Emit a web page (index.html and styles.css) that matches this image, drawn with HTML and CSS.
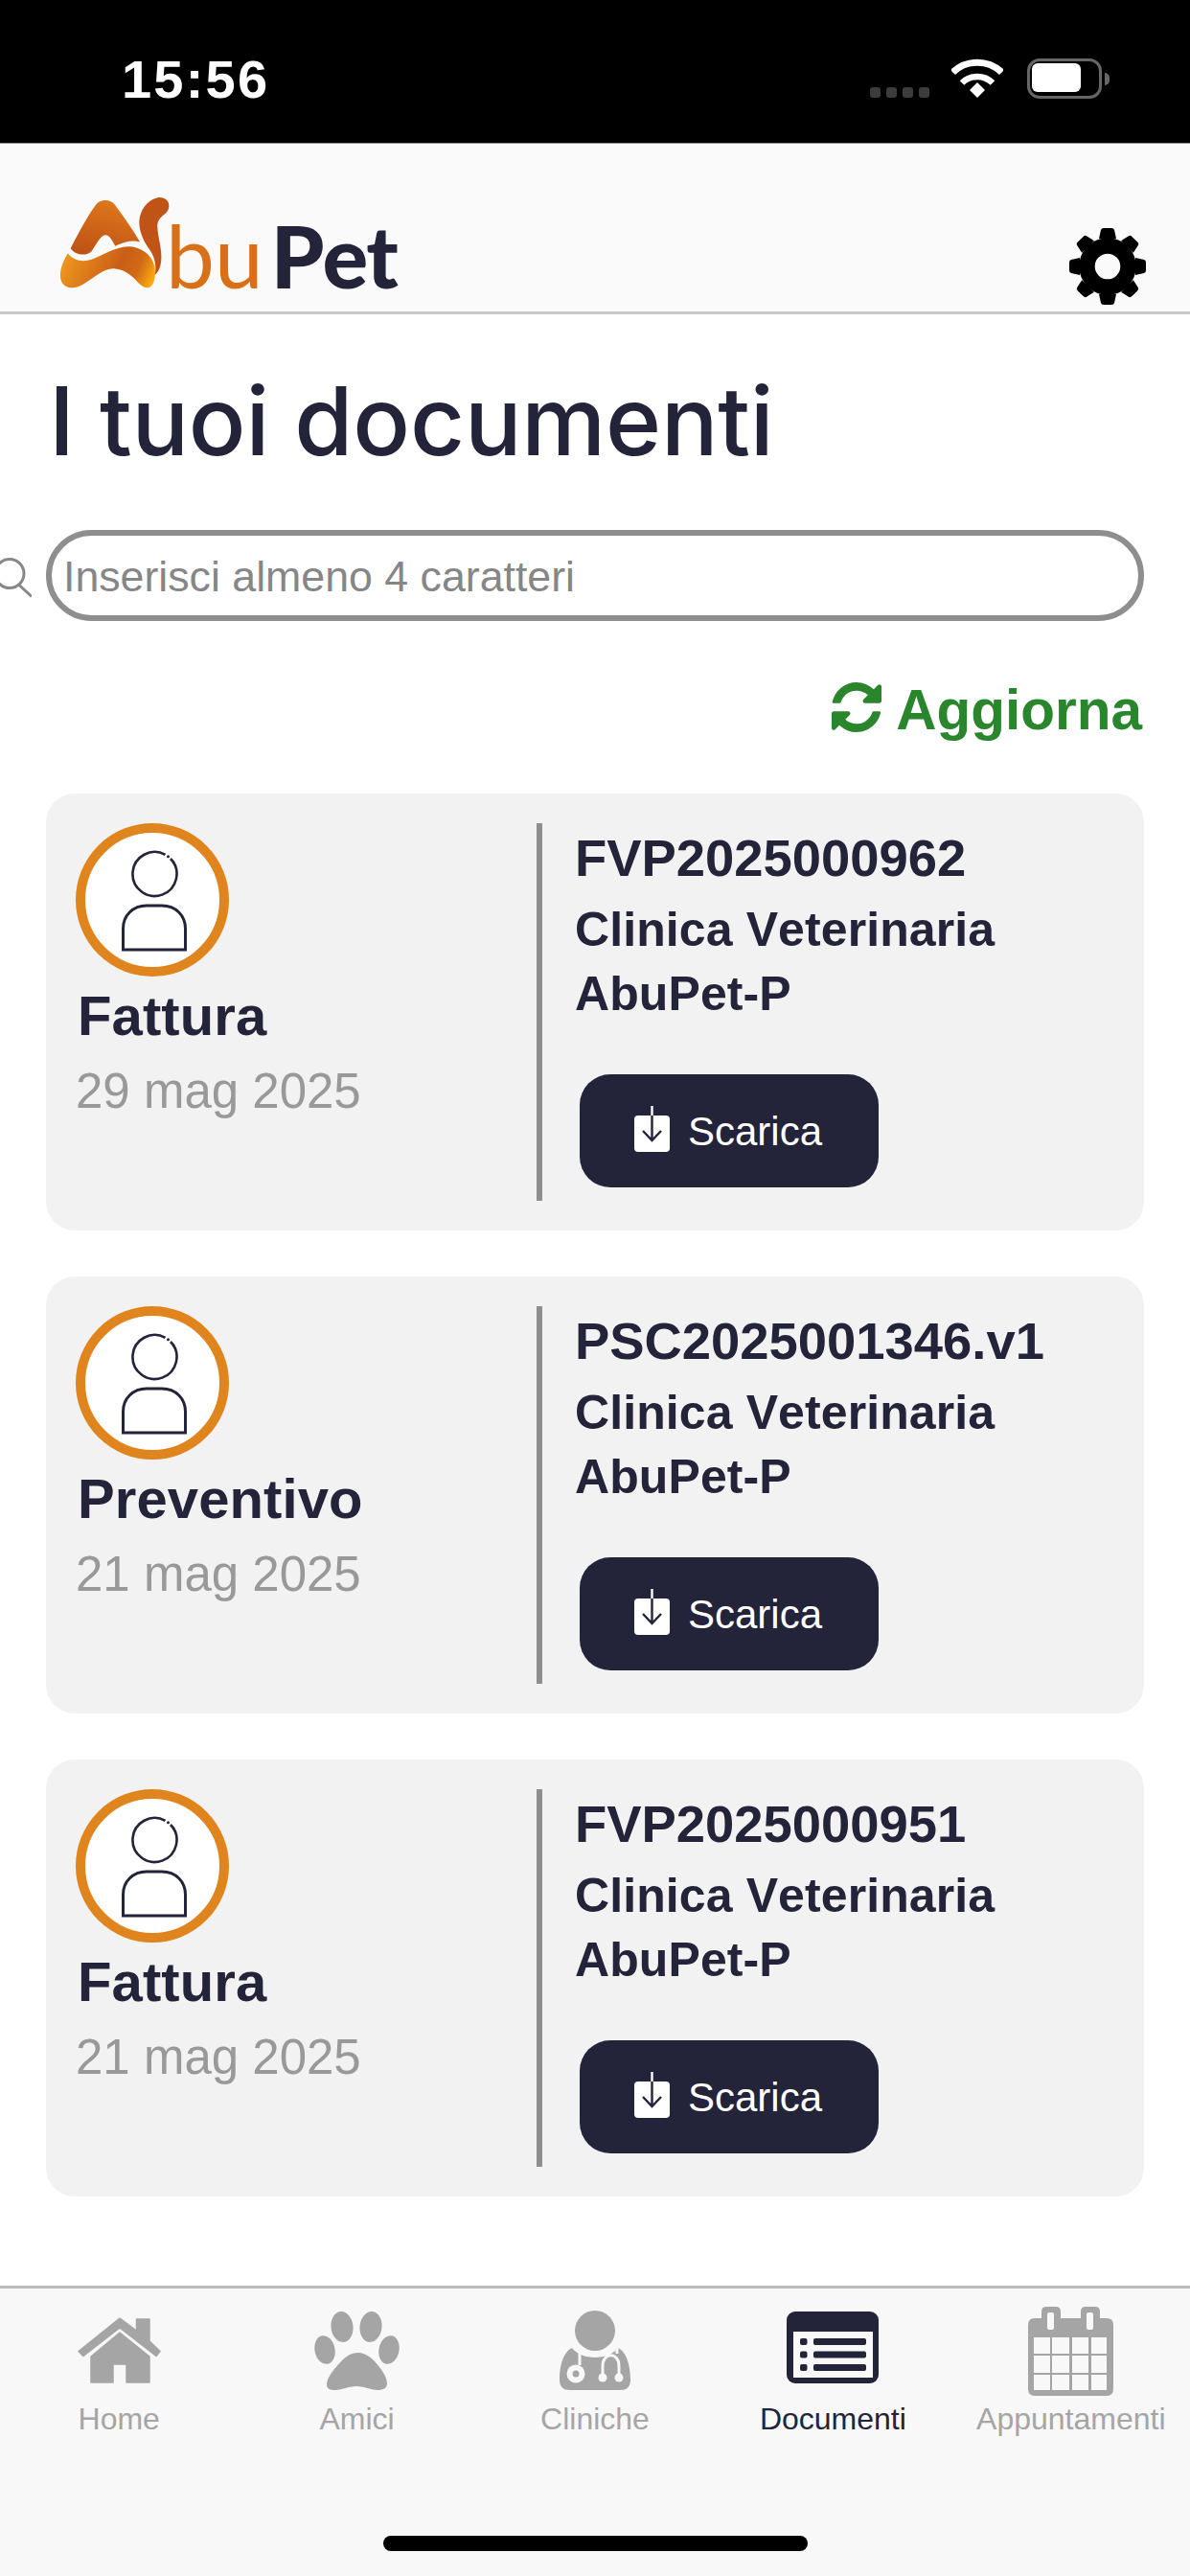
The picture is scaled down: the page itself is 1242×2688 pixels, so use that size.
FILE: index.html
```html
<!DOCTYPE html>
<html lang="it">
<head>
<meta charset="utf-8">
<title>I tuoi documenti</title>
<link rel="stylesheet" href="styles.css">
</head>
<body>
<svg class="defs" aria-hidden="true">
  <symbol id="person" viewBox="0 0 72 108">
    <path d="M53 11A23 23 0 1 1 47.500 6.800" fill="none" stroke="#232339" stroke-width="2.600"/>
    <circle cx="50.500" cy="8.700" r="1.500" fill="#232339"/>
    <path d="M3.500 106V84C3.500 70 14 60 28 60H44C58 60 68.500 70 68.500 84V106Z" fill="none" stroke="#232339" stroke-width="3"/>
  </symbol>
  <symbol id="download" viewBox="0 0 38 48">
    <rect x="0" y="10" width="37" height="38" rx="4" fill="#fff"/>
    <path d="M18.500 0V10" stroke="#fff" stroke-width="2.400"/>
    <path d="M18.500 10V36M9 26L18.500 36L28 26" fill="none" stroke="#232339" stroke-width="2.400"/>
  </symbol>
</svg>

<header class="status">
  <span class="clock">15:56</span>
  <div class="status-icons">
    <div class="signal"><i></i><i></i><i></i><i></i></div>
    <svg class="wifi" viewBox="0 0 54 42"><path d="M1.500 14.500A37 37 0 0 1 52.500 14.500" fill="none" stroke="#fff" stroke-width="7"/><path d="M11 25.500A23 23 0 0 1 43 25.500" fill="none" stroke="#fff" stroke-width="6.500"/><path d="M19 33L27 25L35 33L27 41Z" fill="#fff"/></svg>
    <div class="battery"><div class="battery-level"></div></div>
    <div class="battery-nub"></div>
  </div>
</header>

<div class="appbar">
  <div class="logo">
    <svg class="logo-mark" viewBox="38 48 342 290">
      <defs>
        <linearGradient id="lg1" x1="0.6" y1="0" x2="0.3" y2="1"><stop offset="0" stop-color="#de771b"/><stop offset="1" stop-color="#bf5316"/></linearGradient>
        <linearGradient id="lg2" x1="0" y1="0.5" x2="1" y2="0.7"><stop offset="0" stop-color="#ee961f"/><stop offset="0.6" stop-color="#c95e17"/><stop offset="0.8" stop-color="#d26a15"/><stop offset="1" stop-color="#fbaa10"/></linearGradient>
      </defs>
      <path d="M70 210C90 170 125 105 150 72C165 55 195 55 210 75C235 110 265 150 287 190C265 182 235 190 210 203C200 185 192 168 180 168C165 168 155 190 135 220C120 235 85 232 70 210Z" fill="url(#lg1)"/>
      <path d="M62 225C75 245 105 255 135 245C170 232 210 205 250 204C290 204 322 228 332 262C338 290 335 320 318 332C300 338 285 322 270 305C255 290 235 275 205 273C175 272 145 300 110 322C85 338 55 338 42 315C30 290 45 250 62 225Z" fill="url(#lg2)"/>
      <path d="M340 52C365 45 385 65 376 88C370 105 345 110 342 135C340 165 356 205 354 245C352 270 345 285 334 293C340 260 332 235 318 215C300 190 284 160 285 125C287 90 310 60 340 52Z" fill="#c05316"/>
    </svg>
    <span class="logo-text"><span class="logo-bu">bu</span><span class="logo-pet">Pet</span></span>
  </div>
  <svg class="gear" viewBox="0 0 82 82">
    <g fill="#000">
      <path id="tooth" d="M32 12L34 3Q34.500 1 37 1H45Q47.500 1 48 3L50 12Z"/>
      <use href="#tooth" transform="rotate(45 41 41)"/>
      <use href="#tooth" transform="rotate(90 41 41)"/>
      <use href="#tooth" transform="rotate(135 41 41)"/>
      <use href="#tooth" transform="rotate(180 41 41)"/>
      <use href="#tooth" transform="rotate(225 41 41)"/>
      <use href="#tooth" transform="rotate(270 41 41)"/>
      <use href="#tooth" transform="rotate(315 41 41)"/>
    </g>
    <circle cx="41" cy="41" r="21.500" fill="none" stroke="#000" stroke-width="16.400"/>
  </svg>
</div>

<main class="content">
  <h1 class="title">I tuoi documenti</h1>
  <div class="search">
    <svg class="search-icon" viewBox="0 0 33 48"><circle cx="10" cy="21.500" r="15" fill="none" stroke="#888" stroke-width="3"/><path d="M19 32.500L33 45.500" stroke="#888" stroke-width="3"/></svg>
    <div class="search-field">Inserisci almeno 4 caratteri</div>
  </div>
  <div class="refresh-row">
    <div class="refresh">
      <svg class="refresh-icon" viewBox="128 128 1536 1536"><path fill="#2a862c" d="M1639 1056q0 5-1 7-64 268-268 434.500t-478 166.500q-146 0-282.500-55t-243.500-157l-129 129q-19 19-45 19t-45-19-19-45v-448q0-26 19-45t45-19h448q26 0 45 19t19 45-19 45l-137 137q71 66 161 102t187 36q134 0 250-65t186-179q11-17 53-117 8-23 30-23h192q13 0 22.500 9.500t9.500 22.500zm25-800v448q0 26-19 45t-45 19h-448q-26 0-45-19t-19-45 19-45l138-138q-148-137-349-137-134 0-250 65t-186 179q-11 17-53 117-8 23-30 23h-199q-13 0-22.500-9.500t-9.500-22.500v-7q65-268 270-434.500t480-166.500q146 0 284 55.500t245 156.500l130-129q19-19 45-19t45 19 19 45z"/></svg>
      <span>Aggiorna</span>
    </div>
  </div>

  <section class="cards">
    <article class="card">
      <div class="card-left">
        <div class="avatar"><svg class="avatar-icon"><use href="#person"/></svg></div>
        <div class="doc-type">Fattura</div>
        <div class="doc-date">29 mag 2025</div>
      </div>
      <div class="card-right">
        <div class="doc-number">FVP2025000962</div>
        <div class="doc-clinic">Clinica Veterinaria</div>
        <div class="doc-clinic">AbuPet-P</div>
        <div class="btn"><svg class="btn-icon"><use href="#download"/></svg><span>Scarica</span></div>
      </div>
    </article>
    <article class="card">
      <div class="card-left">
        <div class="avatar"><svg class="avatar-icon"><use href="#person"/></svg></div>
        <div class="doc-type">Preventivo</div>
        <div class="doc-date">21 mag 2025</div>
      </div>
      <div class="card-right">
        <div class="doc-number">PSC2025001346.v1</div>
        <div class="doc-clinic">Clinica Veterinaria</div>
        <div class="doc-clinic">AbuPet-P</div>
        <div class="btn"><svg class="btn-icon"><use href="#download"/></svg><span>Scarica</span></div>
      </div>
    </article>
    <article class="card">
      <div class="card-left">
        <div class="avatar"><svg class="avatar-icon"><use href="#person"/></svg></div>
        <div class="doc-type">Fattura</div>
        <div class="doc-date">21 mag 2025</div>
      </div>
      <div class="card-right">
        <div class="doc-number">FVP2025000951</div>
        <div class="doc-clinic">Clinica Veterinaria</div>
        <div class="doc-clinic">AbuPet-P</div>
        <div class="btn"><svg class="btn-icon"><use href="#download"/></svg><span>Scarica</span></div>
      </div>
    </article>
  </section>
</main>

<nav class="tabbar">
  <div class="tabs">
    <div class="tab">
      <svg class="tab-icon home" viewBox="0 -11 87 93"><path fill="#a5a5a5" stroke="#a5a5a5" stroke-width="1.500" stroke-linejoin="round" d="M44 1L61.500 14V2H75V25L86 35.500L82 40.500L44 11L6 40.500L1 35.500Z"/><path fill="#a5a5a5" stroke="#a5a5a5" stroke-width="1.500" stroke-linejoin="round" d="M44 16L75 41V68H51V49H37V68H14V41Z"/></svg>
      <span class="tab-label">Home</span>
    </div>
    <div class="tab">
      <svg class="tab-icon paw" viewBox="0 -5 89 93"><g fill="#a5a5a5"><ellipse cx="29" cy="16" rx="11.500" ry="16" transform="rotate(-6 29 16)"/><ellipse cx="59" cy="16" rx="11.500" ry="16" transform="rotate(6 59 16)"/><ellipse cx="11" cy="40" rx="10.500" ry="15" transform="rotate(-12 11 40)"/><ellipse cx="78" cy="40" rx="10.500" ry="15" transform="rotate(12 78 40)"/><path d="M45 43C35 43 28 52 21 60C16 66 13 72 13 76C13 81 17 82 22 82C28 82 36 78 44 78C52 78 60 82 66 82C72 82 76 80 76 75C76 70 72 63 68 58C62 50 55 43 45 43Z"/></g></svg>
      <span class="tab-label">Amici</span>
    </div>
    <div class="tab">
      <svg class="tab-icon doctor" viewBox="0 -5 74 93"><ellipse cx="37" cy="20" rx="21" ry="21" fill="#a5a5a5"/><path fill="#a5a5a5" d="M13 38C4 42 0 57 0 71C0 79 4 82 11 82H63C70 82 74 79 74 71C74 57 70 42 61 38C57 44 47 48 37 48C27 48 17 44 13 38Z"/><path fill="none" stroke="#f8f8f8" stroke-width="3" d="M21 38V56M60 37V44M45 68V57C45 42 62 42 62 57V68"/><circle cx="17" cy="65" r="9.500" fill="#f8f8f8"/><circle cx="17" cy="65" r="3.500" fill="#a5a5a5"/><circle cx="45" cy="69" r="4.500" fill="#f8f8f8"/><circle cx="62" cy="69" r="4.500" fill="#f8f8f8"/></svg>
      <span class="tab-label">Cliniche</span>
    </div>
    <div class="tab tab-active">
      <svg class="tab-icon docs" viewBox="0 -5 96 93"><rect width="96" height="75" rx="9" fill="#232339"/><rect x="7" y="21" width="83" height="48" fill="#f8f8f8"/><g fill="#232339"><rect x="14" y="28" width="7.500" height="7" rx="2"/><rect x="14" y="41.500" width="7.500" height="7" rx="2"/><rect x="14" y="55" width="7.500" height="7" rx="2"/><rect x="28" y="28" width="55" height="7" rx="2"/><rect x="28" y="41.500" width="55" height="7" rx="2"/><rect x="28" y="55" width="55" height="7" rx="2"/></g></svg>
      <span class="tab-label">Documenti</span>
    </div>
    <div class="tab">
      <svg class="tab-icon cal" viewBox="0 0 89 93"><path fill="#a5a5a5" d="M7 12H14V5Q14 0 19 0H29Q34 0 34 5V12H55V5Q55 0 60 0H70Q75 0 75 5V12H82Q89 12 89 19V86Q89 93 82 93H7Q0 93 0 86V19Q0 12 7 12Z"/><g fill="#f8f8f8"><rect x="20" y="6" width="7" height="18" rx="2"/><rect x="61" y="6" width="7" height="18" rx="2"/><rect x="6" y="32" width="17" height="17"/><rect x="25" y="32" width="18" height="17"/><rect x="46" y="32" width="17" height="17"/><rect x="66" y="32" width="16" height="17"/><rect x="6" y="51" width="17" height="18"/><rect x="25" y="51" width="18" height="18"/><rect x="46" y="51" width="17" height="18"/><rect x="66" y="51" width="16" height="18"/><rect x="6" y="71" width="17" height="16"/><rect x="25" y="71" width="18" height="16"/><rect x="46" y="71" width="17" height="16"/><rect x="66" y="71" width="16" height="16"/></g></svg>
      <span class="tab-label">Appuntamenti</span>
    </div>
  </div>
  <div class="home-indicator"></div>
</nav>
</body>
</html>
```

FILE: styles.css
```css
* { box-sizing: border-box; }

html, body {
  margin: 0;
  padding: 0;
}

body {
  width: 1242px;
  height: 2688px;
  display: flex;
  flex-direction: column;
  background: #fff;
  color: #232339;
  font-family: "Liberation Sans", Arial, sans-serif;
  font-kerning: none;
  overflow: hidden;
}

.defs { width: 0; height: 0; position: absolute; }

/* Status bar */
.status {
  height: 149px;
  flex: none;
  background: #000;
  color: #fff;
  display: flex;
  justify-content: space-between;
  padding: 53px 84px 0 127px;
}

.clock {
  font-size: 56px;
  font-weight: 700;
  line-height: 60px;
  letter-spacing: 2.200px;
}

.status-icons {
  display: flex;
  align-items: flex-start;
  padding-top: 8px;
}

.signal {
  display: flex;
  gap: 6px;
  margin: 30px 23px 0 0;
}

.signal i {
  width: 11px;
  height: 11px;
  border-radius: 3px;
  background: #3c3c3c;
}

.wifi { width: 54px; height: 42px; margin-right: 25px; }

.battery {
  width: 78px;
  height: 42px;
  border: 3.500px solid #666;
  border-radius: 13px;
  padding: 2px;
}

.battery-level {
  width: 51px;
  height: 30px;
  background: #fff;
  border-radius: 6px;
}

.battery-nub {
  width: 5px;
  height: 13px;
  margin: 15px 0 0 3px;
  background: #666;
  border-radius: 0 6px 6px 0;
}

/* App bar */
.appbar {
  height: 179px;
  flex: none;
  background: #fafafa;
  border-top: 1px solid #8f8f8f;
  border-bottom: 3px solid #c9c9c9;
  display: flex;
  justify-content: space-between;
  align-items: flex-start;
  padding: 57px 45px 0 63px;
}

.logo {
  display: flex;
  align-items: flex-end;
  height: 95px;
}

.logo-mark {
  width: 114px;
  height: 97px;
  flex: none;
}

.logo-text {
  font-family: Lato, sans-serif;
  font-size: 91px;
  line-height: 95px;
  margin-left: -4px;
  position: relative;
  top: 12px;
}

.logo-bu { color: #d96f17; font-weight: 400; }

.logo-pet {
  color: #232339;
  font-size: 89px;
  font-weight: 900;
  letter-spacing: -2px;
  margin-left: 8px;
}

.gear { width: 82px; height: 82px; margin-top: 30px; }

/* Main content */
.content {
  flex: 1;
  min-height: 0;
  padding: 51px 48px 0;
}

.title {
  margin: 0 0 54px 3px;
  font-family: Inter, "Liberation Sans", sans-serif;
  font-kerning: normal;
  font-size: 99px;
  font-weight: 500;
  line-height: 120px;
  letter-spacing: -0.200px;
  color: #232339;
  white-space: nowrap;
}

.search {
  display: flex;
  align-items: center;
  margin-left: -48px;
  gap: 15px;
}

.search-icon { width: 33px; height: 48px; flex: none; }

.search-field {
  flex: 1;
  height: 95px;
  border: 6px solid #8e8e8e;
  border-radius: 48px;
  background: #fff;
  padding-left: 12px;
  font-size: 44.700px;
  line-height: 85px;
  color: #868686;
}

.refresh-row {
  display: flex;
  justify-content: flex-end;
  margin: 60px 2px 54px 0;
}

.refresh {
  display: flex;
  align-items: center;
  gap: 15px;
  color: #2a862c;
  font-size: 58.500px;
  font-weight: 700;
  line-height: 66px;
}

.refresh-icon { width: 52px; height: 52px; flex: none; margin-bottom: 6px; }

/* Cards */
.cards {
  display: flex;
  flex-direction: column;
  gap: 48px;
}

.card {
  height: 456px;
  background: #f2f2f2;
  border-radius: 30px;
  padding: 31px;
  display: flex;
}

.card-left {
  width: 481px;
  flex: none;
}

.avatar {
  width: 160px;
  height: 160px;
  border: 10px solid #e0851e;
  border-radius: 50%;
  background: #fff;
  display: flex;
  align-items: center;
  justify-content: center;
}

.avatar-icon { width: 72px; height: 108px; margin-left: 3px; }

.doc-type {
  margin: 8px 0 0 2px;
  font-size: 58px;
  font-weight: 700;
  line-height: 66px;
  letter-spacing: 0.100px;
}

.doc-date {
  margin-top: 16px;
  font-size: 51px;
  line-height: 60px;
  color: #999;
}

.card-right {
  flex: 1;
  border-left: 6px solid #8e8e8e;
  padding-left: 34px;
}

.doc-number {
  font-size: 54.400px;
  font-weight: 700;
  line-height: 74px;
  margin-bottom: 4px;
  white-space: nowrap;
}

.doc-clinic {
  font-size: 50px;
  font-weight: 700;
  line-height: 67px;
  letter-spacing: 0.100px;
}

.btn {
  width: 312px;
  height: 118px;
  margin: 50px 0 0 5px;
  padding: 2px 0 0 57px;
  background: #232339;
  color: #fff;
  border-radius: 32px;
  display: flex;
  align-items: center;
  gap: 18px;
  font-size: 42px;
}

.btn-icon { width: 38px; height: 48px; flex: none; margin-top: -6px; }

/* Tab bar */
.tabbar {
  height: 303px;
  flex: none;
  background: #f8f8f8;
  border-top: 3px solid #bcbcbc;
  display: flex;
  flex-direction: column;
  align-items: center;
}

.tabs {
  width: 100%;
  display: grid;
  grid-template-columns: repeat(5, 1fr);
  padding-top: 19px;
}

.tab {
  display: flex;
  flex-direction: column;
  align-items: center;
  color: #a5a5a5;
}

.tab-active { color: #232339; }

.tab-icon { height: 93px; display: block; flex: none; }
.home { width: 87px; }
.paw { width: 89px; }
.doctor { width: 74px; }
.docs { width: 96px; }
.cal { width: 89px; }

.tab-label {
  margin-top: 2px;
  font-size: 32px;
  line-height: 44px;
  white-space: nowrap;
}

.home-indicator {
  width: 443px;
  height: 16px;
  margin-top: 100px;
  background: #000;
  border-radius: 8px;
}
```
